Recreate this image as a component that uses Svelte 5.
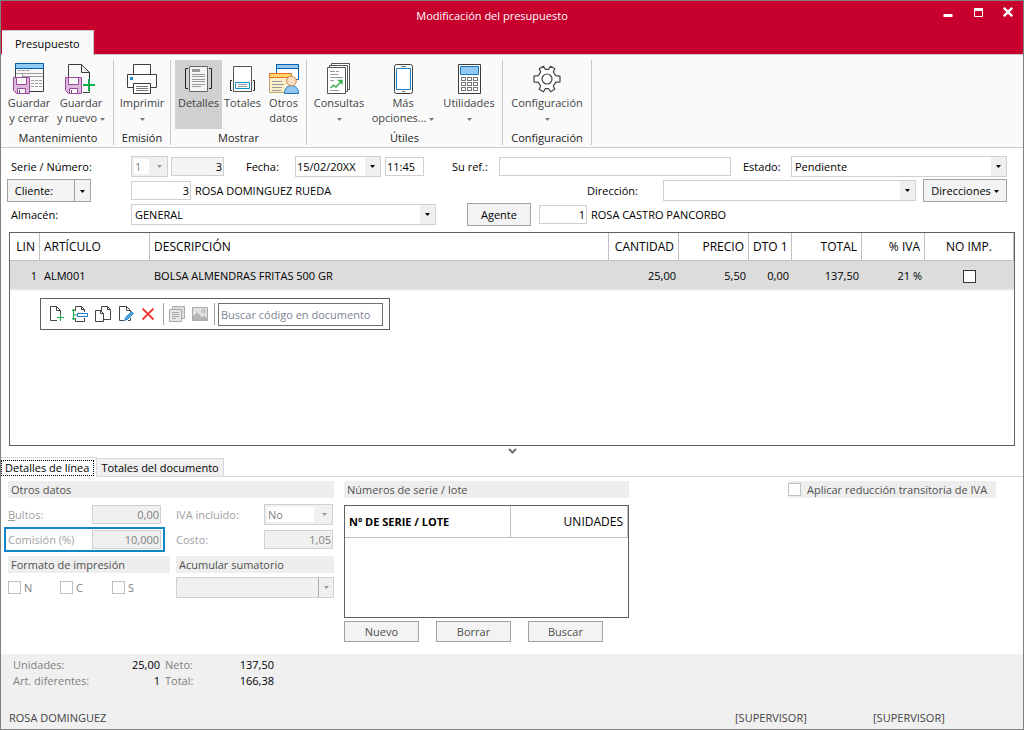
<script lang="ts">
  type Line = {
    lin: number;
    code: string;
    description: string;
    quantity: string;
    price: string;
    discount: string;
    total: string;
    vat: string;
    noPrint: boolean;
  };

  let lines = $state<Line[]>([
    {
      lin: 1,
      code: "ALM001",
      description: "BOLSA ALMENDRAS FRITAS 500 GR",
      quantity: "25,00",
      price: "5,50",
      discount: "0,00",
      total: "137,50",
      vat: "21 %",
      noPrint: false,
    },
  ]);

  let view = $state("detalles");
  let tab = $state("linea");
  let search = $state("");
</script>

{#snippet caret()}
  <svg class="caret" viewBox="0 0 5 3" width="5" height="3" aria-hidden="true"><path d="M0 0h5L2.5 3z" /></svg>
{/snippet}

{#snippet floppy()}
  <path d="M.5 15.5h16v16h-13l-3-3z" fill="#dfb6dc" stroke="#9c4a9c" />
  <path d="M3.500 15.500h10v7h-10z" fill="#fafafa" stroke="#9c4a9c" />
  <path d="M4.500 26.500h8v5h-8z" fill="#fafafa" stroke="#9c4a9c" />
  <path d="M6.500 28v3" stroke="#555" />
{/snippet}

<div class="window">
  <header>
    <div class="titlebar">
      <h1>Modificación del presupuesto</h1>
      <div class="controls">
        <button type="button" aria-label="Minimizar">
          <svg viewBox="0 0 10 10" width="10" height="10"><path d="M.5 7h9v3h-9z" fill="#fff" /></svg>
        </button>
        <button type="button" aria-label="Maximizar">
          <svg viewBox="0 0 10 10" width="10" height="10"><path d="M1.500 1.500h8v8h-8z" fill="none" stroke="#fff" /><path d="M1 1h9v3H1z" fill="#fff" /></svg>
        </button>
        <button type="button" aria-label="Cerrar">
          <svg viewBox="0 0 10 10" width="10" height="10"><path d="M.8.8l8.400 8.400M9.200.8L.8 9.200" stroke="#fff" stroke-width="2.400" /></svg>
        </button>
      </div>
    </div>
    <button class="ribbon-tab" type="button">Presupuesto</button>
  </header>

  <nav class="ribbon">
    <div class="group maintenance">
      <div class="tools">
        <button type="button">
          <svg viewBox="0 0 32 32" fill="none">
            <path d="M2.500 1.500h28v28h-28z" fill="#fafafa" stroke="#3c3c3c" />
            <path d="M2.500 1.500h28v5h-28z" fill="#91c9f2" stroke="#0063b1" />
            <path d="M5 8.500h3m1 0h3m1 0h3M3 11.500h27M9.500 12v4M9 14.500h21" stroke="#9a9a9a" />
            <path d="M18 18.500h3m1 0h3m1 0h3M18 21.500h3m1 0h3m1 0h3M18 24.500h3m1 0h3m1 0h3" stroke="#9a9a9a" />
            {@render floppy()}
          </svg>
          <span>Guardar</span>
          <span>y cerrar</span>
        </button>
        <button type="button">
          <svg viewBox="0 0 32 32" fill="none">
            <path d="M3.500 15V2.500h13l8 8V17M18 30.500h6.500V29" stroke="#3c3c3c" />
            <path d="M16.500 2.500v8h8z" fill="#eee" stroke="#3c3c3c" />
            {@render floppy()}
            <path d="M24 17v12M18 23h12" stroke="#14ab4e" stroke-width="2" />
          </svg>
          <span>Guardar</span>
          <span>y nuevo {@render caret()}</span>
        </button>
      </div>
      <div class="caption">Mantenimiento</div>
    </div>

    <div class="group printing">
      <div class="tools">
        <button type="button">
          <svg viewBox="0 0 32 32" fill="none" stroke="#3c3c3c">
            <path d="M7.500 12.500v-10h17v10" fill="#fff" />
            <path d="M1.500 12.500h29v13h-29z" fill="#fff" />
            <path d="M7.500 21.500h17v10h-17z" fill="#fff" />
            <path d="M10 24.500h12M10 26.500h12M10 28.500h12" stroke="#777" />
            <path d="M4 15h3v3H4z" fill="#1e88d8" stroke="none" />
          </svg>
          <span>Imprimir</span>
          <span>{@render caret()}</span>
        </button>
      </div>
      <div class="caption">Emisión</div>
    </div>

    <div class="group show">
      <div class="tools">
        <button class:active={view === "detalles"} type="button" onclick={() => (view = "detalles")}>
          <svg viewBox="0 0 32 32" fill="none">
            <path d="M6.500 4.500h18v25h-18z" fill="#f4f4f4" stroke="#666" />
            <path d="M9 7h8v3H9z" fill="#999" />
            <path d="M9 12.500h13M9 14.500h13M9 17.500h13M9 19.500h13M9 22.500h13M9 24.500h9" stroke="#999" />
            <path d="M5 6.500H2.500v20H5M26 6.500h2.500v20H26" stroke="#222" />
          </svg>
          <span>Detalles</span>
        </button>
        <button class:active={view === "totales"} type="button" onclick={() => (view = "totales")}>
          <svg viewBox="0 0 32 32" fill="none">
            <path d="M6.500 4.500h18v25h-18z" fill="#fff" stroke="#555" />
            <path d="M8.500 20.500h14v6h-14z" fill="#fff" stroke="#0c93d6" />
            <path d="M11 22.500h9M11 24.500h9" stroke="#999" />
            <path d="M5 18.500H3.500v10H5M26 18.500h1.500v10H26" stroke="#222" />
          </svg>
          <span>Totales</span>
        </button>
        <button class:active={view === "otros"} type="button" onclick={() => (view = "otros")}>
          <svg viewBox="0 0 32 32" fill="none">
            <path d="M8.500 2.500h22v15h-22z" fill="#fff" stroke="#0063b1" />
            <path d="M8.500 2.500h22v4h-22z" fill="#91c9f2" stroke="#0063b1" />
            <path d="M1.500 11.500h22v19h-22z" fill="#fbeecb" stroke="#bda66c" />
            <path d="M1.500 11.500h22v4h-22z" fill="#fbd66c" stroke="#e8722a" />
            <path d="M4 19.500h10M4 22.500h12M4 25.500h10M4 28.500h9" stroke="#999" />
            <path d="M16.500 31.500c0-5 3-8 7-8s7 3 7 8z" fill="#94c8f0" stroke="#1673bf" />
            <circle cx="23.500" cy="19" r="4.800" fill="#f9ddc0" stroke="#cc8a55" />
          </svg>
          <span>Otros</span>
          <span>datos</span>
        </button>
      </div>
      <div class="caption">Mostrar</div>
    </div>

    <div class="group useful">
      <div class="tools">
        <button class="queries" type="button">
          <svg viewBox="0 0 32 32" fill="none" stroke="#555">
            <path d="M8.500 1.500h18v26h-18z" fill="#fff" />
            <path d="M6.500 3.500h18v26h-18z" fill="#fff" />
            <path d="M4.500 5.500h18v26h-18z" fill="#fff" />
            <path d="M7 9.500h5m1 0h3M7 12.500h8M7 15.500h13M7 18.500h4M7 28.500h9" stroke="#999" />
            <path d="M7.500 26l3-3 2.500 2 5.500-6M15 18.500h4v4" stroke="#2eab46" stroke-width="1.300" />
          </svg>
          <span>Consultas</span>
          <span>{@render caret()}</span>
        </button>
        <button class="more" type="button">
          <svg viewBox="0 0 32 32" fill="none" stroke="#3c3c3c">
            <rect x="7.500" y="2.500" width="18" height="29" rx="2" fill="#fff" />
            <path d="M9.500 6.500h14v21h-14z" stroke="#1e80c8" />
            <path d="M14 4.500h5M15 29.500h3" stroke="#777" />
          </svg>
          <span>Más</span>
          <span>opciones... {@render caret()}</span>
        </button>
        <button type="button">
          <svg viewBox="0 0 32 32" fill="none" stroke="#3c3c3c">
            <path d="M5.500 2.500h22v29h-22z" fill="#fff" />
            <path d="M7.500 4.500h18v8h-18z" fill="#91c9f2" stroke="#1673bf" />
            {#each [15, 20, 25] as y}
              {#each [8, 14, 20] as x}
                <rect x={x + 0.5} y={y + 0.5} width="4" height="3" stroke="#777" />
              {/each}
            {/each}
          </svg>
          <span>Utilidades</span>
          <span>{@render caret()}</span>
        </button>
      </div>
      <div class="caption">Útiles</div>
    </div>

    <div class="group setup">
      <div class="tools">
        <button type="button">
          <svg viewBox="0 0 32 32" fill="none" stroke="#444" stroke-width="1.200">
            <path d="M14.200 7.300l-1.700-3-4.300 2.400 1.500 3.300-2.400 3.600-4.300.6v5.600l4.300.6 2.400 3.600-1.500 3.300 4.300 2.400 1.700-3h3.600l1.700 3 4.300-2.400-1.500-3.300 2.400-3.600 4.300-.6v-5.600l-4.300-.6-2.400-3.600 1.500-3.300-4.300-2.400-1.700 3z" fill="#fff" stroke-linejoin="round" />
            <circle cx="16" cy="17" r="5" />
          </svg>
          <span>Configuración</span>
          <span>{@render caret()}</span>
        </button>
      </div>
      <div class="caption">Configuración</div>
    </div>
  </nav>

  <main>
    <form class="document">
      <div class="row">
        <label class="first" for="serie">Serie / Número:</label>
        <div class="combo serie disabled">
          <select id="serie" disabled><option>1</option></select>
          <span class="arrow">{@render caret()}</span>
        </div>
        <input class="numero num" aria-label="Número" value="3" readonly />
        <label class="fecha-label" for="fecha">Fecha:</label>
        <div class="combo fecha">
          <input id="fecha" value="15/02/20XX" />
          <span class="arrow">{@render caret()}</span>
        </div>
        <input class="hora" aria-label="Hora" value="11:45" />
        <label class="ref-label" for="ref">Su ref.:</label>
        <input class="ref" id="ref" />
        <label class="estado-label" for="estado">Estado:</label>
        <div class="combo estado">
          <select id="estado"><option>Pendiente</option></select>
          <span class="arrow">{@render caret()}</span>
        </div>
      </div>

      <div class="row">
        <div class="split first">
          <button type="button">Cliente:</button>
          <button type="button" aria-label="Opciones de cliente">{@render caret()}</button>
        </div>
        <input class="cliente num" aria-label="Cliente" value="3" />
        <span class="name">ROSA DOMINGUEZ RUEDA</span>
        <label class="direccion-label" for="direccion">Dirección:</label>
        <div class="combo direccion">
          <select id="direccion"><option></option></select>
          <span class="arrow">{@render caret()}</span>
        </div>
        <button class="push direcciones" type="button">Direcciones {@render caret()}</button>
      </div>

      <div class="row">
        <label class="first" for="almacen">Almacén:</label>
        <div class="combo almacen">
          <select id="almacen"><option>GENERAL</option></select>
          <span class="arrow">{@render caret()}</span>
        </div>
        <button class="push agente" type="button">Agente</button>
        <input class="agente-code num" aria-label="Agente" value="1" />
        <span class="name">ROSA CASTRO PANCORBO</span>
      </div>
    </form>

    <section class="lines">
      <table>
        <colgroup>
          <col class="c-lin" /><col class="c-code" /><col /><col class="c-qty" /><col class="c-qty" />
          <col class="c-dto" /><col class="c-qty" /><col class="c-vat" /><col class="c-noimp" />
        </colgroup>
        <thead>
          <tr>
            <th class="right">LIN</th>
            <th>ARTÍCULO</th>
            <th>DESCRIPCIÓN</th>
            <th class="right">CANTIDAD</th>
            <th class="right">PRECIO</th>
            <th class="right">DTO 1</th>
            <th class="right">TOTAL</th>
            <th class="right">% IVA</th>
            <th class="center">NO IMP.</th>
          </tr>
        </thead>
        <tbody>
          {#each lines as line}
            <tr>
              <td class="right">{line.lin}</td>
              <td>{line.code}</td>
              <td>{line.description}</td>
              <td class="right">{line.quantity}</td>
              <td class="right">{line.price}</td>
              <td class="right">{line.discount}</td>
              <td class="right">{line.total}</td>
              <td class="right">{line.vat}</td>
              <td class="center"><input type="checkbox" class="dark" aria-label="No imprimir" bind:checked={line.noPrint} /></td>
            </tr>
          {/each}
        </tbody>
      </table>

      <div class="line-tools">
        <button type="button" aria-label="Nueva línea">
          <svg viewBox="0 0 16 16" fill="none" stroke="#444"><path d="M8 14.500H1.500V.5h6l4 4V8M7.500.5v4h4" /><path d="M11.500 8v7M8 11.500h7" stroke="#14ab4e" /></svg>
        </button>
        <button type="button" aria-label="Insertar línea">
          <svg viewBox="0 0 16 16" fill="none" stroke="#444"><path d="M3.500 5V.5h6l3 3V6M9.500.5v3h3M3.500 12v3.500h9V12" /><path d="M5.500 7.500h10v3h-10z" stroke="#1e80c8" fill="#fff" /><path d="M1.500 3v11M0 5l1.500-2L3 5M0 12l1.500 2L3 12M1 9h4" stroke="#14ab4e" /></svg>
        </button>
        <button type="button" aria-label="Duplicar línea">
          <svg viewBox="0 0 16 16" fill="none" stroke="#444"><path d="M6.500 10.500V.5h6l3 3v10H9" /><path d="M12.500.5v3h3" /><path d="M.5 4.500h5l3 3v8h-8z" fill="#fff" /><path d="M5.500 4.500v3h3" /></svg>
        </button>
        <button type="button" aria-label="Modificar línea">
          <svg viewBox="0 0 16 16" fill="none" stroke="#444"><path d="M6 14.500H1.500V.5h7l4 4V6M8.500.5v4h4M12.500 12v2.500H10" /><path d="M6.500 14.500l1-3 6-6 2 2-6 6z" fill="#4da3e0" stroke="#1e80c8" stroke-width=".8" /></svg>
        </button>
        <button type="button" aria-label="Borrar línea">
          <svg viewBox="0 0 16 16" fill="none" stroke="#ee4038" stroke-width="2"><path d="M1.500 2.500l11 11M12.500 2.500l-11 11" /></svg>
        </button>
        <span class="divider"></span>
        <button type="button" aria-label="Ver documentos" disabled>
          <svg viewBox="0 0 16 16" fill="none" stroke="#aaa"><path d="M3.500.5h12v12h-12z" fill="#ddd" /><path d="M.5 3.500h12v12H.5z" fill="#e6e6e6" /><path d="M3 6.500h7M3 8.500h7M3 10.500h7M3 12.500h4" /></svg>
        </button>
        <button type="button" aria-label="Ver imagen" disabled>
          <svg viewBox="0 0 16 16" fill="none" stroke="#aaa"><path d="M.5 1.500h15v13H.5z" fill="#e0e0e0" /><path d="M1 11l4-4 5 5 2-2 3 3v1H1z" fill="#b8b8b8" /><circle cx="11.500" cy="5" r="1.500" /></svg>
        </button>
        <span class="divider"></span>
        <input type="text" aria-label="Buscar código en documento" placeholder="Buscar código en documento" bind:value={search} />
      </div>
    </section>

    <button class="splitter" type="button" aria-label="Contraer detalles">
      <svg viewBox="0 0 9 6" width="9" height="6"><path d="M1 1l3.500 3.500L8 1" fill="none" stroke="#707070" stroke-width="2" /></svg>
    </button>

    <div class="tabs" role="tablist">
      <button class:selected={tab === "linea"} role="tab" aria-selected={tab === "linea"} type="button" onclick={() => (tab = "linea")}><span>Detalles de línea</span></button>
      <button class:selected={tab === "totales"} role="tab" aria-selected={tab === "totales"} type="button" onclick={() => (tab = "totales")}><span>Totales del documento</span></button>
    </div>

    <section class="detail">
      <div class="other">
        <h2>Otros datos</h2>
        <div class="fields">
          <div class="field">
            <label for="bultos"><u>B</u>ultos:</label>
            <input id="bultos" class="num" value="0,00" disabled />
          </div>
          <div class="field">
            <label for="iva">IVA incluido:</label>
            <div class="combo disabled">
              <select id="iva" disabled><option>No</option></select>
              <span class="arrow">{@render caret()}</span>
            </div>
          </div>
          <div class="field marked">
            <label for="comision">Comisión (%)</label>
            <input id="comision" class="num" value="10,000" disabled />
          </div>
          <div class="field">
            <label for="costo">Costo:</label>
            <input id="costo" class="num" value="1,05" disabled />
          </div>
        </div>
        <div class="formats">
          <div class="format">
            <h2>Formato de impresión</h2>
            <div class="checks">
              {#each ["N", "C", "S"] as option}
                <label><input type="checkbox" disabled />{option}</label>
              {/each}
            </div>
          </div>
          <div class="sum">
            <h2 id="sumatorio">Acumular sumatorio</h2>
            <div class="combo disabled flat">
              <select aria-labelledby="sumatorio" disabled><option></option></select>
              <span class="arrow">{@render caret()}</span>
            </div>
          </div>
        </div>
      </div>

      <div class="serials">
        <h2>Números de serie / lote</h2>
        <div class="serial-box">
          <table>
            <thead>
              <tr><th class="bold">Nº DE SERIE / LOTE</th><th class="right units">UNIDADES</th></tr>
            </thead>
          </table>
        </div>
        <div class="actions">
          <button class="push" type="button">Nuevo</button>
          <button class="push" type="button">Borrar</button>
          <button class="push" type="button">Buscar</button>
        </div>
      </div>

      <label class="reduction"><input type="checkbox" />Aplicar reducción transitoria de IVA</label>
    </section>
  </main>

  <footer>
    <dl>
      <dt>Unidades:</dt><dd>25,00</dd>
      <dt>Neto:</dt><dd>137,50</dd>
      <dt>Art. diferentes:</dt><dd>1</dd>
      <dt>Total:</dt><dd>166,38</dd>
    </dl>
    <div class="status">
      <span>ROSA DOMINGUEZ</span>
      <span>[SUPERVISOR]</span>
      <span>[SUPERVISOR]</span>
    </div>
  </footer>
</div>

<style>
  :global(body) {
    background: #fff;
    font: 11px/15px "Open Sans", "Noto Sans", sans-serif;
    color: #000;
  }

  .window,
  .window :global(*) {
    box-sizing: border-box;
  }

  .window {
    min-height: 100vh;
    display: flex;
    flex-direction: column;
    border: 1px solid #808080;
  }

  button,
  input,
  select {
    margin: 0;
    padding: 0;
    border: 0;
    border-radius: 0;
    background: none;
    color: inherit;
    font: inherit;
    min-width: 0;
  }

  button {
    white-space: nowrap;
  }

  h1,
  h2,
  dl,
  dd {
    margin: 0;
  }

  .caret {
    fill: currentColor;
    vertical-align: middle;
  }

  header {
    background: #c8002d;
    border-bottom: 1px solid #c8c8c8;
  }

  .titlebar {
    display: flex;
    height: 29px;
    padding-left: 50px;
  }

  h1 {
    flex: 1;
    color: #fff;
    font-size: 11px;
    font-weight: 400;
    line-height: 30px;
    text-align: center;
  }

  .controls {
    display: flex;
    height: 22px;
  }

  .controls button {
    display: grid;
    width: 30px;
    place-items: center;
  }

  .ribbon-tab {
    display: block;
    height: 25px;
    margin: 0 0 -1px 1px;
    padding: 0 13px;
    background: #fafafa;
    border: solid #c8c8c8;
    border-width: 1px 1px 0 0;
  }

  .ribbon {
    display: flex;
    padding: 5px 0 2px;
    background: #fafafa;
    border-bottom: 1px solid #c8c8c8;
    color: #444;
  }

  .group {
    display: flex;
    flex-direction: column;
    border-right: 1px solid #c8c8c8;
  }

  .tools {
    display: flex;
    height: 69px;
  }

  .tools button {
    display: flex;
    flex-direction: column;
    align-items: center;
    padding-top: 2px;
  }

  .tools svg:not(.caret) {
    width: 32px;
    height: 32px;
    margin-bottom: 1px;
  }

  .tools .caret {
    color: #777;
  }

  .tools span .caret {
    margin-left: 3px;
  }

  .tools span .caret:only-child {
    margin-left: 0;
  }

  .tools .active {
    background: #d0d0d0;
  }

  .caption {
    padding-top: 2px;
    color: #222;
    line-height: 14px;
    text-align: center;
  }

  .maintenance {
    width: 113px;
    padding-left: 2px;
  }

  .maintenance button {
    width: 52px;
  }

  .printing button {
    width: 56px;
  }

  .show .tools {
    padding: 0 2px 0 4px;
  }

  .show button {
    width: 41px;
  }

  .show button:first-child {
    width: 47px;
  }

  .useful .tools {
    padding: 0 1px 0 2px;
  }

  .useful button {
    width: 64px;
  }

  .useful .queries {
    width: 60px;
  }

  .useful .more {
    width: 68px;
  }

  .setup button {
    width: 88px;
  }

  main {
    flex: 1;
    display: flex;
    flex-direction: column;
  }

  .document {
    padding: 6px 16px 6px 6px;
  }

  .row {
    display: flex;
    align-items: center;
    height: 24px;
  }

  .first {
    flex: none;
    width: 124px;
  }

  label.first {
    padding-left: 4px;
  }

  .row > input,
  .combo,
  .field > input {
    flex: none;
    height: 19px;
    border: 1px solid #d0d0d0;
    background: #fff;
  }

  .row > input {
    padding: 0 4px;
  }

  .row > .num {
    padding: 0 1px;
  }

  .num {
    text-align: right;
  }

  .combo {
    display: grid;
    height: 21px;
  }

  .combo > * {
    grid-area: 1 / 1;
  }

  .combo select,
  .combo input {
    width: 100%;
    padding: 0 20px 0 3px;
    appearance: none;
  }

  .combo input {
    padding-left: 1px;
  }

  .combo select:disabled {
    opacity: 1;
    color: #808080;
  }

  .combo.disabled select {
    background: #fff;
    border: 2px solid #f0f0f0;
    border-right-width: 18px;
    padding: 0 0 0 1px;
  }

  .combo.flat select {
    background: #f0f0f0;
  }

  .arrow {
    display: grid;
    width: 15px;
    place-items: center;
    justify-self: end;
    background: #f0f0f0;
    pointer-events: none;
  }

  .disabled .arrow {
    color: #999;
  }

  .flat .arrow {
    border-left: 1px solid #aaa;
  }

  .row > .numero {
    width: 53px;
    margin-left: 3px;
    background: #f4f4f4;
  }

  .serie {
    width: 37px;
  }

  .fecha-label {
    width: 49px;
    margin-left: 22px;
  }

  .fecha {
    width: 86px;
  }

  .hora {
    width: 39px;
    margin-left: 4px;
  }

  .row > .hora {
    padding: 0 1px;
  }

  .ref-label {
    width: 47px;
    margin-left: 28px;
  }

  .row > .ref {
    flex: 1;
  }

  .estado-label {
    width: 48px;
    margin-left: 12px;
  }

  .estado {
    width: 216px;
  }

  .split {
    display: flex;
    height: 23px;
  }

  .split button {
    background: #f3f3f3;
    border: 1px solid #a0a0a0;
  }

  .split button:first-child {
    width: 68px;
    padding-right: 14px;
  }

  .split button:last-child {
    width: 17px;
    margin-left: -1px;
  }

  .row > .cliente {
    width: 60px;
  }

  .name {
    margin-left: 4px;
  }

  .direccion-label {
    width: 76px;
    margin-left: auto;
  }

  .direccion {
    width: 253px;
  }

  .push {
    height: 23px;
    background: #f3f3f3;
    border: 1px solid #a0a0a0;
  }

  .direcciones {
    width: 84px;
    margin-left: 7px;
  }

  .almacen {
    width: 305px;
  }

  .agente {
    width: 64px;
    margin-left: 31px;
  }

  .row > .agente-code {
    width: 48px;
    margin-left: 8px;
  }

  .lines {
    flex: 1;
    margin: 0 8px;
    border: 1px solid #606060;
  }

  table {
    width: 100%;
    border-collapse: separate;
    border-spacing: 0;
    table-layout: fixed;
  }

  th,
  td {
    padding: 0 4px;
    text-align: left;
    white-space: nowrap;
  }

  th {
    height: 28px;
    border: solid #c0c0c0;
    border-width: 0 1px 1px 0;
    font-size: 12px;
    font-weight: 400;
  }

  td {
    height: 30px;
    background: #dcdcdc;
    border-bottom: 2px solid #f0f0f0;
  }

  .right {
    text-align: right;
  }

  td.right {
    padding-right: 3px;
  }

  .center {
    text-align: center;
  }

  .c-lin {
    width: 30px;
  }

  .c-code {
    width: 110px;
  }

  .c-qty {
    width: 70px;
  }

  .c-dto {
    width: 43px;
  }

  .c-vat {
    width: 63px;
  }

  .c-noimp {
    width: 89px;
  }

  input[type="checkbox"] {
    flex: none;
    width: 13px;
    height: 13px;
    border: 1px solid #c0c0c0;
    background: #fff;
    appearance: none;
    vertical-align: middle;
  }

  input[type="checkbox"].dark {
    border-color: #333;
  }

  input[type="checkbox"]:checked {
    background: #666;
  }

  .line-tools {
    display: inline-flex;
    align-items: center;
    gap: 7px;
    height: 32px;
    margin: 7px 0 0 30px;
    padding: 0 6px 0 8px;
    border: 1px solid #606060;
  }

  .line-tools button,
  .line-tools button svg {
    display: block;
    width: 16px;
    height: 16px;
  }

  .line-tools input {
    width: 165px;
    height: 23px;
    margin-left: -2px;
    padding: 0 2px;
    border: 1px solid #707070;
  }

  .line-tools input::placeholder {
    color: #7b8494;
    opacity: 1;
  }

  .divider {
    width: 1px;
    height: 22px;
    margin: 0 -2px 0 -1px;
    background: #a0a0a0;
  }

  .splitter {
    display: grid;
    height: 11px;
    padding-bottom: 2px;
    place-items: center;
  }

  .tabs {
    display: flex;
    align-items: flex-end;
    height: 20px;
    border-bottom: 1px solid #d8d8d8;
  }

  .tabs button {
    height: 18px;
    padding: 0 4px;
    background: #f0f0f0;
    border: solid #d8d8d8;
    border-width: 1px 1px 0 0;
  }

  .tabs .selected {
    height: 20px;
    margin-bottom: -1px;
    padding: 0 2px 0 0;
    background: #fff;
  }

  .tabs .selected span {
    display: block;
    height: 16px;
    padding: 0 4px 0 3px;
    border: 1px dotted #000;
    line-height: 14px;
  }

  .detail {
    display: flex;
    align-items: flex-start;
    padding: 4px 27px 12px 7px;
    color: #505050;
  }

  h2 {
    height: 17px;
    padding-left: 3px;
    background: #eee;
    font-size: 11px;
    font-weight: 400;
    line-height: 17px;
  }

  .other {
    width: 326px;
  }

  .fields {
    display: grid;
    grid-template-columns: 161px 165px;
    column-gap: 7px;
    margin: 4px -4px;
    color: #a0a0a0;
  }

  .field {
    display: flex;
    align-items: center;
    height: 25px;
    padding: 0 4px;
  }

  .marked {
    padding: 0 2px;
    border: 2px solid #0f86c8;
  }

  .field label {
    flex: 1;
  }

  .field > input,
  .field > .combo {
    width: 69px;
    background: #f0f0f0;
  }

  .field > input {
    padding: 0 1px;
    color: #808080;
  }

  .formats {
    display: flex;
    justify-content: space-between;
  }

  .format {
    width: 162px;
  }

  .sum {
    width: 158px;
  }

  .sum .combo {
    margin-top: 4px;
  }

  .checks {
    display: flex;
    margin-top: 7px;
    color: #808080;
  }

  .checks label {
    display: flex;
    align-items: center;
    gap: 3px;
    width: 52px;
  }

  .serials {
    width: 285px;
    margin-left: 10px;
  }

  .serial-box {
    height: 113px;
    margin: 7px 0 3px;
    border: 1px solid #606060;
    color: #000;
  }

  .serial-box th {
    height: 32px;
  }

  th.bold {
    font-size: 11px;
    font-weight: 700;
  }

  .units {
    width: 117px;
  }

  .actions {
    display: flex;
    gap: 17px;
  }

  .actions .push {
    width: 75px;
    height: 21px;
  }

  .reduction {
    display: flex;
    align-items: center;
    gap: 6px;
    width: 208px;
    height: 17px;
    margin-left: auto;
    background: #eee;
    white-space: nowrap;
  }

  footer {
    padding: 3px 8px 4px;
    background: #f0f0f0;
    color: #444;
  }

  dl {
    display: grid;
    grid-template-columns: 87px 60px 54px 60px;
    padding-left: 4px;
    line-height: 16px;
  }

  dt {
    color: #808080;
  }

  dd {
    color: #000;
    text-align: right;
  }

  dt:nth-of-type(even) {
    padding-left: 5px;
  }

  .status {
    display: grid;
    grid-template-columns: 1fr 138px 142px;
    margin-top: 21px;
  }
</style>
